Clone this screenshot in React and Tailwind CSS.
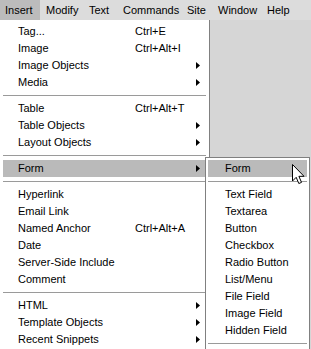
import React from 'react';

const font = { fontFamily: '"Liberation Sans", Arial, sans-serif' };

// menu bar titles with their widths, so they sit where the reference has them
const menuBar = [
    { label: 'Insert', w: 'w-[40px] pl-[5px] bg-[#bcbcbc]' },
    { label: 'Modify', w: 'w-[43px] pl-[6px]' },
    { label: 'Text', w: 'w-[34px] pl-[6px]' },
    { label: 'Commands', w: 'w-[64px] pl-[6px]' },
    { label: 'Site', w: 'w-[31px] pl-[6px]' },
    { label: 'Window', w: 'w-[49px] pl-[6px]' },
    { label: 'Help', w: 'w-[40px] pl-[6px]' },
];

// main dropdown: rows and separators
const items = [
    { label: 'Tag...', key: 'Ctrl+E' },
    { label: 'Image', key: 'Ctrl+Alt+I' },
    { label: 'Image Objects', sub: true },
    { label: 'Media', sub: true },
    { sep: true },
    { label: 'Table', key: 'Ctrl+Alt+T' },
    { label: 'Table Objects', sub: true },
    { label: 'Layout Objects', sub: true },
    { sep: true },
    { label: 'Form', sub: true, active: true },
    { sep: true },
    { label: 'Hyperlink' },
    { label: 'Email Link' },
    { label: 'Named Anchor', key: 'Ctrl+Alt+A' },
    { label: 'Date' },
    { label: 'Server-Side Include' },
    { label: 'Comment' },
    { sep: true },
    { label: 'HTML', sub: true },
    { label: 'Template Objects', sub: true },
    { label: 'Recent Snippets', sub: true },
];

const formItems = [
    { label: 'Form', active: true },
    { sep: true },
    { label: 'Text Field' },
    { label: 'Textarea' },
    { label: 'Button' },
    { label: 'Checkbox' },
    { label: 'Radio Button' },
    { label: 'List/Menu' },
    { label: 'File Field' },
    { label: 'Image Field' },
    { label: 'Hidden Field' },
    { sep: true },
];

const Arrow = () => (
    <svg width="4" height="7" viewBox="0 0 4 7" className="block">
        <path d="M0 0 L4 3.5 L0 7 Z" fill="#000" />
    </svg>
);

const Separator = () => (
    <div className="h-[9px] flex flex-col justify-center">
        <div className="h-px bg-[#9a9a9a]" />
        <div className="h-px bg-white" />
    </div>
);

const Cursor = () => (
    <svg width="14" height="22" viewBox="0 0 14 22" className="absolute left-[292px] top-[164px]">
        <path
            d="M0.5 0.5 L0.5 17 L4.2 13.3 L6.8 19.5 L9.5 18.4 L6.9 12.3 L12 12.3 Z"
            fill="#fff"
            stroke="#000"
            strokeWidth="1"
        />
    </svg>
);

export default function App() {
    return (
        <div className="relative w-[311px] h-[349px] overflow-hidden bg-[#d6d6d6] text-[11px] text-black" style={font}>
            {/* menu bar */}
            <div className="flex h-[20px] items-center bg-[#dcdcdc]">
                {menuBar.map((m) => (
                    <div key={m.label} className={`h-full flex items-center whitespace-nowrap ${m.w}`}>
                        {m.label}
                    </div>
                ))}
            </div>

            {/* Insert dropdown */}
            <div className="w-[210px] bg-white border-r border-[#808080] px-[3px] pt-[3px] h-[329px]">
                {items.map((it, i) =>
                    it.sep ? (
                        <Separator key={i} />
                    ) : (
                        <div
                            key={i}
                            className={`h-[17px] grid grid-cols-[117px_1fr_10px] items-center pl-[15px] ${it.active ? 'bg-[#bababa]' : ''}`}
                        >
                            <span className="whitespace-nowrap">{it.label}</span>
                            <span className="whitespace-nowrap">{it.key}</span>
                            <span>{it.sub && <Arrow />}</span>
                        </div>
                    )
                )}
            </div>

            {/* Form submenu */}
            <div className="absolute left-[205px] top-[157px] w-[105px] h-[200px] bg-white border border-[#808080] px-[2px] pt-[2px]">
                {formItems.map((it, i) =>
                    it.sep ? (
                        <Separator key={i} />
                    ) : (
                        <div
                            key={i}
                            className={`h-[17px] flex items-center pl-[17px] whitespace-nowrap ${it.active ? 'bg-[#bababa]' : ''}`}
                        >
                            {it.label}
                        </div>
                    )
                )}
            </div>

            <Cursor />
        </div>
    );
}
